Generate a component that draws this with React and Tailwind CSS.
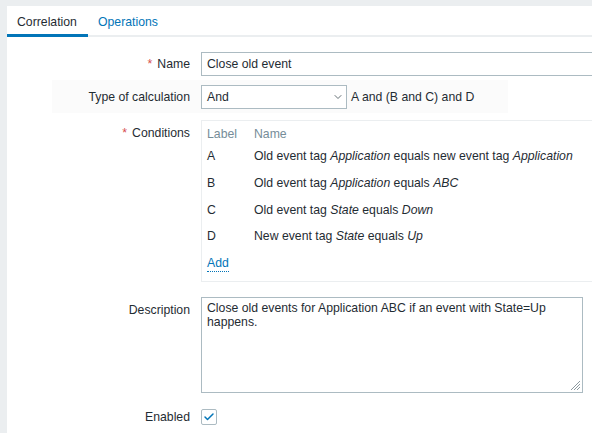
import { ChevronDown, Check } from "lucide-react";

const conditions = [
    { label: "A", parts: ["Old event tag ", ["Application"], " equals new event tag ", ["Application"]] },
    { label: "B", parts: ["Old event tag ", ["Application"], " equals ", ["ABC"]] },
    { label: "C", parts: ["Old event tag ", ["State"], " equals ", ["Down"]] },
    { label: "D", parts: ["New event tag ", ["State"], " equals ", ["Up"]] },
];

function Label({ required, children, className = "" }) {
    return (
        <div className={`text-right shrink-0 ${className}`}>
            {required && <span className="text-[#d64e4e] mr-[5px]">*</span>}
            {children}
        </div>
    );
}

export default function App() {
    return (
        <div className="w-[592px] h-[433px] overflow-hidden bg-[#ebeef0] pl-[7px] pt-[6px] text-[12.25px] text-[#1f2c33]"
            style={{ fontFamily: '"Liberation Sans", Arial, sans-serif' }}>
            <div className="bg-white h-full overflow-hidden">
                <div className="flex h-[31px] border-b-2 border-[#ebeef0]">
                    <div className="px-[10px] pt-[7px] border-b-[3px] border-[#0275b8] -mb-[2px] w-[81px]">Correlation</div>
                    <div className="px-[10px] pt-[7px] text-[#0275b8]">Operations</div>
                </div>

                <div className="flex items-center mt-[15px] h-[24px]">
                    <Label required className="w-[183px]">Name</Label>
                    <div className="ml-[11px] w-[453px] h-[24px] border border-[#acbbc2] px-[5px] flex items-center shrink-0">
                        Close old event
                    </div>
                </div>

                <div className="flex items-center mt-[4px] ml-[45px] w-[456px] h-[33px] pt-[1px] bg-[#fbfbfb]">
                    <Label className="w-[138px]">Type of calculation</Label>
                    <div className="ml-[11px] w-[146px] h-[24px] border border-[#acbbc2] bg-white pl-[5px] pr-[2px] flex items-center justify-between shrink-0">
                        <span>And</span>
                        <ChevronDown size={12} strokeWidth={1.75} className="text-[#4f5b61]" />
                    </div>
                    <span className="ml-[4px]">A and (B and C) and D</span>
                </div>

                <div className="flex mt-[7px]">
                    <Label required className="w-[183px] pt-[4px]">Conditions</Label>
                    <div className="ml-[11px] w-[453px] h-[162px] shrink-0 border border-[#ebeef0] pl-[5px] pt-[6px]">
                        <div className="flex text-[#768d99] h-[15px] items-center">
                            <span className="w-[47px]">Label</span>
                            <span>Name</span>
                        </div>
                        {conditions.map((c) => (
                            <div key={c.label} className="flex h-[26.7px] items-center pt-[2px] first:h-[19px]">
                                <span className="w-[47px]">{c.label}</span>
                                <span className="whitespace-nowrap">
                                    {c.parts.map((p, i) => (Array.isArray(p) ? <i key={i}>{p[0]}</i> : <span key={i}>{p}</span>))}
                                </span>
                            </div>
                        ))}
                        <div className="mt-[5px]">
                            <span className="text-[#0275b8] border-b border-dotted border-[#0275b8] pb-[1px]">Add</span>
                        </div>
                    </div>
                </div>

                <div className="flex mt-[15px]">
                    <Label className="w-[183px] pt-[4px]">Description</Label>
                    <div className="relative ml-[11px] w-[382px] h-[96px] shrink-0 border border-[#acbbc2] px-[5px] pt-[3px] leading-[14px]">
                        Close old events for Application ABC if an event with State=Up happens.
                        <svg className="absolute right-[1px] bottom-[1px]" width="12" height="12" viewBox="0 0 12 12">
                            <path d="M11 2 L2 11 M11 5 L5 11 M11 8 L8 11" stroke="#8d9aa0" strokeWidth="1" />
                        </svg>
                    </div>
                </div>

                <div className="flex items-center mt-[15px]">
                    <Label className="w-[183px]">Enabled</Label>
                    <div className="ml-[11px] w-[16px] h-[16px] border border-[#acbbc2] rounded-[2px] flex items-center justify-center">
                        <Check size={12} strokeWidth={3} className="text-[#0275b8]" />
                    </div>
                </div>
            </div>
        </div>
    );
}
